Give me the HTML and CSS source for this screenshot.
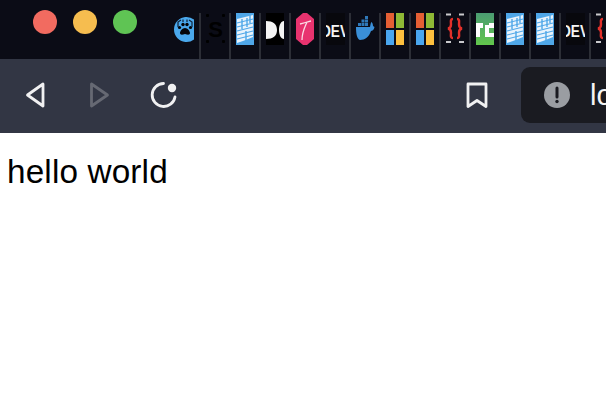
FILE: index.html
```html
<!DOCTYPE html>
<html lang="en">
<head>
<meta charset="utf-8">
<title>hello world</title>
<link rel="stylesheet" href="styles.css">
</head>
<body>
<svg class="defs" width="0" height="0" aria-hidden="true">
  <defs>
    <linearGradient id="tc" x1="0" y1="0" x2="0" y2="1"><stop offset="0" stop-color="#4b9c72"/><stop offset="1" stop-color="#62c74c"/></linearGradient>
    <symbol id="doc" viewBox="0 0 20 32">
      <rect x="1" y="0" width="18" height="32" fill="#4fa7e8"/>
      <path d="M2 6 L18 2 V24 L8 28 L2 30 Z" fill="#e8f3fc"/>
      <g fill="none" stroke="#4fa7e8">
        <path stroke-width="1.100" d="M2 10 L18 6 M2 14 L18 10 M2 18 L18 14 M2 22 L18 18 M2 26 L18 22"/>
        <path stroke-width="1.400" d="M7 6 V16 M12 5 V14 M15 2 V10 M11 18 V28"/>
      </g>
    </symbol>
    <symbol id="dev" viewBox="0 0 20 32">
      <rect x="1" y="0" width="19" height="32" fill="#08080d"/>
      <svg x="1" y="0" width="19" height="32" viewBox="0 0 19 32">
        <text x="-5" y="24" class="dev-text" textLength="28" lengthAdjust="spacingAndGlyphs">DEV</text>
      </svg>
    </symbol>
    <symbol id="ms" viewBox="0 0 20 32">
      <rect x="1" y="0" width="8" height="15" fill="#e45f34"/>
      <rect x="11" y="0" width="8" height="15" fill="#8fb935"/>
      <rect x="1" y="17" width="8" height="15" fill="#4aa6ee"/>
      <rect x="11" y="17" width="8" height="15" fill="#fcbf3e"/>
    </symbol>
    <symbol id="braces" viewBox="0 0 20 32">
      <path d="M1 1.500H6M14 1.500H19M1 29H6M14 29H19" stroke="#c9c9cc" stroke-width="2" fill="none"/>
      <path d="M8 6 C5 6 6 9 6 11.500 C6 13.500 5.500 15 3 15.500 C5.500 16 6 17.500 6 19.500 C6 22 5 25 8 25 M12 6 C15 6 14 9 14 11.500 C14 13.500 14.500 15 17 15.500 C14.500 16 14 17.500 14 19.500 C14 22 15 25 12 25" fill="none" stroke="#e2302a" stroke-width="2.400"/>
    </symbol>
  </defs>
</svg>

<header class="browser">
  <div class="tabbar">
    <div class="lights">
      <span class="light light-red"></span>
      <span class="light light-yellow"></span>
      <span class="light light-green"></span>
    </div>
    <ul class="tabs">
      <li class="tab"><svg class="favicon" viewBox="0 0 20 32">
        <path d="M19 6.500 A12.500 12.500 0 1 0 19 26.500 Z" fill="#4aa8ec"/>
        <path d="M10 15c-2.500 0-5 3-5 5 0 2 2 2 5 1 3 1 5 1 5-1 0-2-2.500-5-5-5z" fill="#050508"/>
        <circle cx="4.500" cy="14.500" r="1.600" fill="#050508"/><circle cx="8" cy="11.500" r="1.700" fill="#050508"/><circle cx="12" cy="11.500" r="1.700" fill="#050508"/><circle cx="15.500" cy="14.500" r="1.600" fill="#050508"/>
        <path d="M3 14V9L6 7M8 9V6.500M12 9V6.500M17 14V9L14 7" fill="none" stroke="#10233a" stroke-width="1.200"/>
      </svg></li>
      <li class="tab"><svg class="favicon" viewBox="0 0 20 32">
        <g fill="#000"><rect x="1" y="1" width="3" height="3" rx="1"/><rect x="17" y="1" width="3" height="3" rx="1"/><rect x="1" y="27" width="3" height="3" rx="1"/><rect x="17" y="27" width="3" height="3" rx="1"/></g>
        <text x="10.500" y="24" class="s-text">S</text>
      </svg></li>
      <li class="tab"><svg class="favicon"><use href="#doc"/></svg></li>
      <li class="tab"><svg class="favicon" viewBox="0 0 20 32">
        <rect x="1" y="0" width="18" height="32" fill="#000"/>
        <path d="M1 8 C8 8 12 11 12 17 C12 23 8 26 1 26 Z M19 8 C16 8 14 12 14 17 C14 22 16 26 19 26 Z" fill="#f4f4f4"/>
      </svg></li>
      <li class="tab"><svg class="favicon" viewBox="0 0 20 32">
        <path d="M8 0 H12 L19 6 V26 L12 32 H8 L1 26 V6 Z" fill="#e8336f"/>
        <path d="M5 11 C9 10 12 9 16 8 M12 9 C10 14 7 19 7 27" fill="none" stroke="#fbdbe5" stroke-width="1.300"/>
      </svg></li>
      <li class="tab"><svg class="favicon"><use href="#dev"/></svg></li>
      <li class="tab"><svg class="favicon" viewBox="0 0 20 32">
        <path d="M1 14 H15 C15.500 11 16 9.500 16.500 9 C17.500 10 18 11.500 18 13 L19.500 14 C19 17 17 18 16 18 C14 24 10 27 5 27 C2 26 1 21 1 14 Z" fill="#3a8fd8"/>
        <path d="M3 10h3v3h-3zM6.500 10h3v3h-3zM10 10h3v3h-3zM6.500 6.500h3v3h-3zM10 6.500h3v3h-3zM10 3h3v3h-3z" fill="#2f78b8"/>
      </svg></li>
      <li class="tab"><svg class="favicon"><use href="#ms"/></svg></li>
      <li class="tab"><svg class="favicon"><use href="#ms"/></svg></li>
      <li class="tab"><svg class="favicon"><use href="#braces"/></svg></li>
      <li class="tab"><svg class="favicon" viewBox="0 0 20 32">
        <rect x="1" y="0" width="18" height="32" fill="url(#tc)"/>
        <path d="M1 10 H8 V15 H5 V24 H1 Z M10 12 H14 V10 H19 V15 H14 V20 H19 V24 H10 Z" fill="#fff"/>
      </svg></li>
      <li class="tab"><svg class="favicon"><use href="#doc"/></svg></li>
      <li class="tab"><svg class="favicon"><use href="#doc"/></svg></li>
      <li class="tab"><svg class="favicon"><use href="#dev"/></svg></li>
      <li class="tab"><svg class="favicon"><use href="#braces"/></svg></li>
    </ul>
  </div>

  <nav class="toolbar">
    <button class="tool" type="button" aria-label="Back"><svg class="tool-icon" viewBox="0 0 24 28">
      <path d="M19 3 V25 L3.500 14 Z" class="stroke"/>
    </svg></button>
    <button class="tool" type="button" aria-label="Forward"><svg class="tool-icon" viewBox="0 0 24 28">
      <path d="M3.500 3 V25 L19.500 14 Z" class="stroke stroke-dim"/>
    </svg></button>
    <button class="tool" type="button" aria-label="Reload"><svg class="tool-icon tool-icon-wide" viewBox="0 0 28 28">
      <path d="M13.500 2.500 A11.500 11.500 0 1 0 25 16" class="stroke"/>
      <circle cx="22" cy="7" r="4.200" fill="#f1f1f2"/>
    </svg></button>
    <button class="tool tool-bookmark" type="button" aria-label="Bookmark"><svg class="tool-icon" viewBox="0 0 24 28">
      <path d="M3 3 H21 V25.500 L12 19.500 L3 25.500 Z" class="stroke"/>
    </svg></button>
    <div class="address">
      <svg class="alert" viewBox="0 0 26 26">
        <circle cx="13" cy="13" r="13" fill="#9a9da2"/>
        <path d="M13 6 V15" stroke="#1a1b21" stroke-width="3" stroke-linecap="round"/>
        <circle cx="13" cy="19.500" r="1.700" fill="#1a1b21"/>
      </svg>
      <span class="url">lo</span>
    </div>
  </nav>
</header>

<main class="page">hello world</main>
</body>
</html>
```

FILE: styles.css
```css
* { box-sizing: border-box; }

html, body {
  margin: 0;
  height: 100%;
  overflow: hidden;
  background: #fff;
}

.defs { position: absolute; }

.browser {
  display: flex;
  flex-direction: column;
  font-family: "Liberation Sans", Arial, sans-serif;
}

.tabbar {
  display: flex;
  height: 59px;
  background: #0b0c16;
  overflow: hidden;
}

.lights {
  display: flex;
  flex: 0 0 171px;
  gap: 16px;
  padding: 10px 0 0 33px;
}

.light {
  width: 24px;
  height: 24px;
  border-radius: 50%;
}

.light-red { background: #f26b60; }
.light-yellow { background: #f6bd4f; }
.light-green { background: #5fc454; }

.tabs {
  display: flex;
  flex: none;
  list-style: none;
  margin: 13px 0 0;
  padding: 0;
}

.tab {
  flex: none;
  width: 30px;
  height: 46px;
  display: flex;
  justify-content: center;
  border-right: 2px solid #2c2e36;
}

.favicon {
  display: block;
  flex: none;
  width: 20px;
  height: 32px;
  overflow: visible;
}

.dev-text {
  font: 700 17px "Liberation Sans", Arial, sans-serif;
  fill: #f5f5f5;
}

.s-text {
  font: 700 22px "Liberation Sans", Arial, sans-serif;
  fill: #000;
  text-anchor: middle;
}

.toolbar {
  display: flex;
  align-items: center;
  height: 74px;
  padding: 0 0 2px 4px;
  background: #323644;
  overflow: hidden;
}

.tool {
  flex: none;
  display: flex;
  align-items: center;
  justify-content: center;
  width: 64px;
  height: 56px;
  padding: 0;
  border: 0;
  background: none;
}

.tool-bookmark { margin: 0 12px 0 249px; }

.tool-icon {
  display: block;
  width: 24px;
  height: 28px;
  overflow: visible;
}

.tool-icon-wide { width: 28px; }

.stroke {
  fill: none;
  stroke: #f1f1f2;
  stroke-width: 2.800;
  stroke-linejoin: round;
  stroke-linecap: round;
}

.stroke-dim { stroke: #666973; }

.address {
  flex: none;
  display: flex;
  align-items: center;
  gap: 20px;
  width: 240px;
  height: 56px;
  padding-left: 23px;
  border-radius: 9px;
  background: #1a1b21;
}

.alert {
  flex: none;
  width: 26px;
  height: 26px;
}

.url {
  color: #f4f4f4;
  font-size: 29px;
  line-height: 1;
  white-space: nowrap;
}

.page {
  padding: 19px 0 0 7px;
  color: #000;
  font-family: "Liberation Sans", Arial, sans-serif;
  font-size: 33.3px;
  letter-spacing: 0.15px;
  line-height: 40px;
}
```
